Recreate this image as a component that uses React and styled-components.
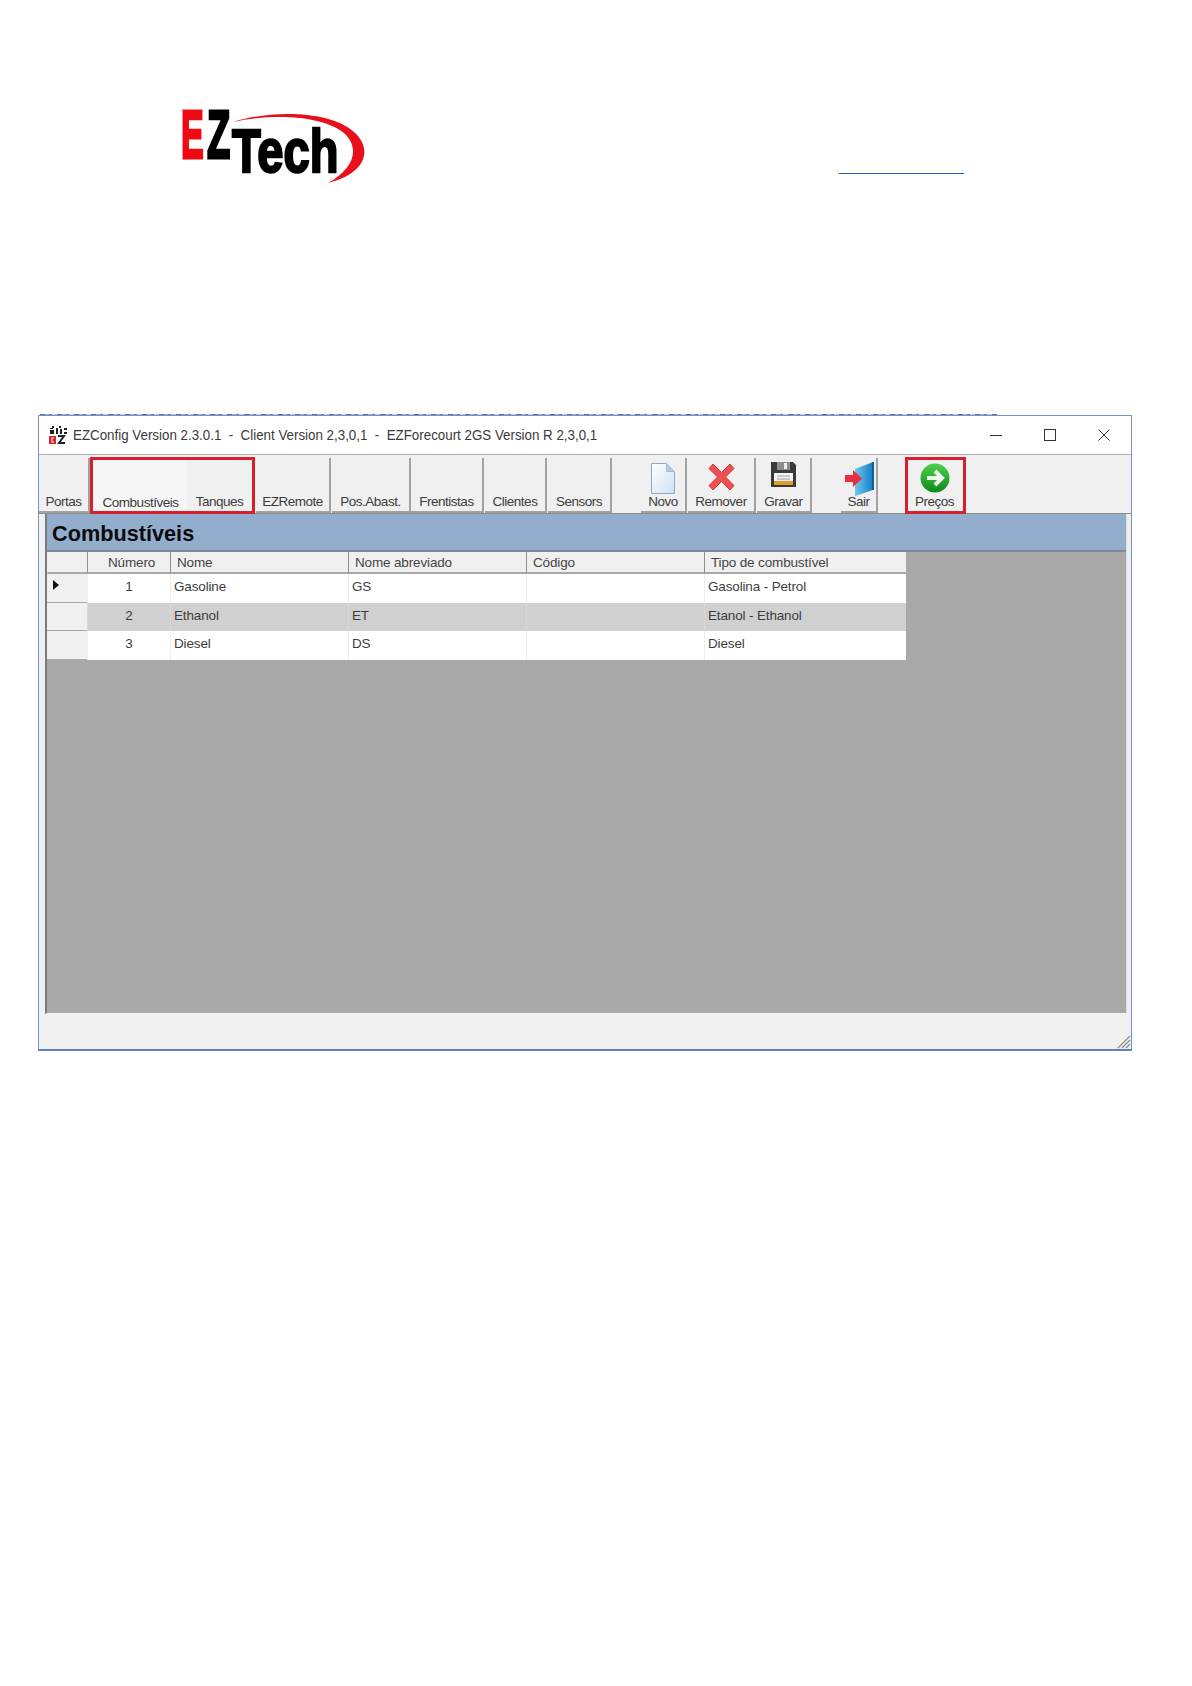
import React from "react";
import styled, { createGlobalStyle } from "styled-components";

const GlobalStyle = createGlobalStyle`
  html, body { margin: 0; padding: 0; background: #fff; }
  body { font-family: "Liberation Sans", Arial, sans-serif; }
`;

const COLUMNS = "40px 83px 178px 178px 178px 202px";

const fuels = [
  { num: 1, name: "Gasoline", short: "GS", type: "Gasolina - Petrol", current: true },
  { num: 2, name: "Ethanol", short: "ET", type: "Etanol - Ethanol", shaded: true },
  { num: 3, name: "Diesel", short: "DS", type: "Diesel" },
];

const Page = styled.div`
  width: 1192px;
  height: 1686px;
  background: #fff;
  overflow: hidden;
`;

const Header = styled.header`
  box-sizing: border-box;
  height: 414px;
  padding: 90px 0 0 170px;
  display: flex;
  align-items: flex-start;
`;

const LinkRule = styled.div`
  width: 125px;
  height: 1px;
  margin: 83px 0 0 469px;
  background: #1f5fa8;
`;

const CutLine = styled.div`
  width: 957px;
  height: 1px;
  margin-left: 40px;
  background: repeating-linear-gradient(90deg, #5f6c9f 0 5px, #a3aed4 5px 9px, #6d79aa 9px 12px, #c4cde6 12px 17px);
`;

const Window = styled.div`
  box-sizing: border-box;
  width: 1094px;
  height: 636px;
  margin-left: 38px;
  display: flex;
  flex-direction: column;
  background: #f0f0f0;
  border: 1px solid #7391cf;
  border-bottom-width: 2px;
  border-bottom-color: #5f80c4;
`;

const TitleBar = styled.div`
  height: 38px;
  flex: none;
  display: flex;
  align-items: center;
  padding: 0 21px 0 9px;
  background: #fff;
  border-bottom: 1px solid #aeaeae;
  color: #3a3a3a;
  font-size: 14.5px;
`;

const TitleText = styled.span`
  margin-left: 5px;
  flex: 1;
  white-space: pre;
  transform: scaleX(0.92);
  transform-origin: left center;
`;

const WindowControls = styled.div`
  display: flex;
  align-items: center;
  gap: 42px;
  color: #333;
`;

const Toolbar = styled.div`
  height: 59px;
  flex: none;
  display: flex;
  align-items: flex-end;
  border-bottom: 1px solid #8d8d8d;
  box-sizing: border-box;
`;

const Tab = styled.div`
  box-sizing: border-box;
  width: ${(p) => p.$w}px;
  height: ${(p) => (p.$active ? 53 : 55)}px;
  margin-left: ${(p) => p.$gap || 0}px;
  display: flex;
  flex-direction: column;
  align-items: center;
  justify-content: flex-end;
  padding-bottom: ${(p) => (p.$active ? 1 : 2)}px;
  padding-left: ${(p) => (p.$active ? 5 : 0)}px;
  background: ${(p) => (p.$active ? "#f6f6f6" : "#f0f0f0")};
  border-right: 2px solid ${(p) => (p.$flat ? "transparent" : "#a2a2a2")};
  border-bottom: 2px solid ${(p) => (p.$flat ? "transparent" : "#a2a2a2")};
  color: #3c3c3c;
  font-size: 13.5px;
  letter-spacing: -0.5px;
  white-space: nowrap;
`;

const ToolIcon = styled.svg`
  display: block;
  flex: none;
  margin-bottom: ${(p) => p.$mb || 0}px;
`;

const Highlight = styled.div`
  position: relative;
  display: flex;
  align-items: flex-end;
  margin-left: ${(p) => p.$gap || 0}px;

  &::after {
    content: "";
    position: absolute;
    inset: -1px;
    border: 3px solid #d81f2e;
    pointer-events: none;
  }
`;

const Content = styled.div`
  flex: 1;
  margin: 0 4px 0 6px;
  display: flex;
  flex-direction: column;
  background: #a9a9a9;
  border-left: 2px solid #7b7b7b;
  border-bottom: 1px solid #f7f7f7;
  border-right: 1px solid #dedede;
`;

const Banner = styled.div`
  height: 38px;
  flex: none;
  box-sizing: border-box;
  display: flex;
  align-items: center;
  padding: 3px 0 0 5px;
  background: #93aecd;
  border-bottom: 2px solid #7f8a99;
  color: #0b0b0b;
  font-size: 21.7px;
  font-weight: 700;
`;

const Grid = styled.div`
  width: 859px;
  display: flex;
  flex-direction: column;
`;

const Row = styled.div`
  display: grid;
  grid-template-columns: ${COLUMNS};
  height: ${(p) => p.$h}px;
  box-sizing: border-box;
`;

const HeadCell = styled.div`
  display: flex;
  align-items: center;
  padding-left: ${(p) => (p.$num ? 20 : 6)}px;
  background: #f0f0f0;
  border-bottom: 2px solid #a8a8a8;
  border-left: 1px solid ${(p) => (p.$blank ? "transparent" : "#8f8f8f")};
  color: #444;
  font-size: 13.5px;
  letter-spacing: -0.15px;
`;

const RowHead = styled.div`
  display: flex;
  align-items: flex-start;
  padding: 6px 0 0 6px;
  box-sizing: border-box;
  background: #f0f0f0;
  border-bottom: 1px solid #a8a8a8;
`;

const Arrow = styled.span`
  width: 0;
  height: 0;
  border-left: 6px solid #111;
  border-top: 5px solid transparent;
  border-bottom: 5px solid transparent;
`;

const Cell = styled.div`
  display: flex;
  align-items: flex-start;
  justify-content: ${(p) => (p.$num ? "center" : "flex-start")};
  padding: 5px 0 0 ${(p) => (p.$num ? 0 : 3)}px;
  box-sizing: border-box;
  background: ${(p) => (p.$shaded ? "#d0d0d0" : "#fff")};
  border-left: 1px solid ${(p) => (p.$shaded ? "#d8d8d8" : "#efefef")};
  color: #3d3d3d;
  font-size: 13.5px;
  letter-spacing: -0.15px;
`;

const StatusBar = styled.div`
  height: 35px;
  flex: none;
  display: flex;
  justify-content: flex-end;
  align-items: flex-end;
`;

const LogoText = styled.text`
  font-family: "Liberation Sans", Arial, sans-serif;
  font-weight: 700;
`;

const Logo = () => (
  <svg width="200" height="100" viewBox="170 90 200 100">
    <path
      d="M233 122C270 110 330 110 354 132C374 150 365 174 328 183C352 170 361 150 345 134C325 116 275 113 233 122Z"
      fill="#e8101c"
    />
    <g transform="translate(181 158) scale(0.5 1)">
      <LogoText fontSize="68" fill="#ee0a12" stroke="#ee0a12" strokeWidth="3">E</LogoText>
    </g>
    <g transform="translate(207 158) scale(0.56 1)">
      <LogoText fontSize="68" fill="#000" stroke="#000" strokeWidth="3">Z</LogoText>
    </g>
    <g transform="translate(232 172) scale(0.76 1)">
      <LogoText fontSize="62" fill="#000" stroke="#000" strokeWidth="2.4">Tech</LogoText>
    </g>
  </svg>
);

const AppIcon = () => (
  <svg width="20" height="20" viewBox="0 0 20 20">
    <path d="M2 3h3v1H2zM4 1h2v2H4zM8 3h2v6H8zM11 1h2v2h-2zM12 4h2v5h-2zM16 3h3v2h-3zM16 7h3v2h-3zM2 5h4v4H2z" fill="#222" />
    <rect x="1" y="11" width="7" height="8" fill="#d8242a" />
    <path d="M3 13h3M3 15h2M3 17h3" stroke="#fff" strokeWidth="1" />
    <path d="M10 11h6l-5 7h6" fill="none" stroke="#222" strokeWidth="2" />
  </svg>
);

const NovoIcon = () => (
  <ToolIcon width="24" height="31" viewBox="0 0 24 31">
    <defs>
      <linearGradient id="docFill" x1="0" y1="0" x2="1" y2="1">
        <stop offset="0" stopColor="#fff" />
        <stop offset="1" stopColor="#cfe0f4" />
      </linearGradient>
    </defs>
    <path d="M.5.5h15l8 8v22H.5z" fill="url(#docFill)" stroke="#8fa8cc" />
    <path d="M15.500.5v8h8z" fill="#b8cbe4" stroke="#a8bcd8" />
  </ToolIcon>
);

const RemoverIcon = () => (
  <ToolIcon width="27" height="28" viewBox="0 0 27 28" $mb={3}>
    <path d="M5 1l8.500 8.500L22 1l4 4.500-8.500 8.500 8.500 8.500-4 4.500-8.500-8.500L5 27l-4-4.500L9.500 14 1 5.500z" fill="#ee4f50" stroke="#cf3a3c" strokeWidth="1" />
  </ToolIcon>
);

const GravarIcon = () => (
  <ToolIcon width="27" height="27" viewBox="0 0 27 27" $mb={6}>
    <path d="M1 1h22l3 3v22H1z" fill="#3a3a3a" />
    <rect x="7" y="1" width="13" height="8" fill="#8e8e8e" />
    <rect x="14" y="2" width="3" height="6" fill="#eee" />
    <rect x="4" y="12" width="19" height="12" fill="#f4f4f4" />
    <rect x="4" y="20" width="19" height="4" fill="#e89a28" />
    <path d="M7 15h13M7 18h13" stroke="#999" />
  </ToolIcon>
);

const SairIcon = () => (
  <ToolIcon width="30" height="35" viewBox="0 0 30 35" $mb={-2}>
    <defs>
      <linearGradient id="doorFill" x1="0" y1="0" x2="1" y2="0">
        <stop offset="0" stopColor="#6fc4ea" />
        <stop offset="1" stopColor="#1480c4" />
      </linearGradient>
    </defs>
    <path d="M11 8l18-7v28l-18 6z" fill="url(#doorFill)" />
    <path d="M29 1v28" stroke="#0d5f9e" strokeWidth="2" />
    <path d="M1 14h8V9l9 8.500-9 8.500v-5H1z" fill="#ea2f3c" />
  </ToolIcon>
);

const PrecosIcon = () => (
  <ToolIcon width="30" height="30" viewBox="0 0 30 30" $mb={1}>
    <defs>
      <linearGradient id="goFill" x1="0" y1="0" x2="0" y2="1">
        <stop offset="0" stopColor="#4fd04a" />
        <stop offset="1" stopColor="#0f8a1c" />
      </linearGradient>
    </defs>
    <circle cx="15" cy="15" r="14.500" fill="url(#goFill)" />
    <path d="M7 15h14M15 8l7 7-7 7" fill="none" stroke="#eef8ea" strokeWidth="4" />
  </ToolIcon>
);

const Grip = () => (
  <svg width="14" height="14" viewBox="0 0 14 14" style={{ display: "block" }}>
    <path d="M1 13L13 1M5 13l8-8M9 13l4-4" stroke="#8a8a8a" strokeWidth="1.2" />
  </svg>
);

const App = () => (
  <Page>
    <GlobalStyle />
    <Header>
      <Logo />
      <LinkRule />
    </Header>
    <CutLine />
    <Window>
      <TitleBar>
        <AppIcon />
        <TitleText>EZConfig Version 2.3.0.1  -  Client Version 2,3,0,1  -  EZForecourt 2GS Version R 2,3,0,1</TitleText>
        <WindowControls>
          <svg width="12" height="12" viewBox="0 0 12 12"><path d="M0 6.500h12" stroke="currentColor" /></svg>
          <svg width="12" height="12" viewBox="0 0 12 12"><rect x=".5" y=".5" width="11" height="11" fill="none" stroke="currentColor" /></svg>
          <svg width="12" height="12" viewBox="0 0 12 12"><path d="M.5.5l11 11M11.500.5l-11 11" stroke="currentColor" /></svg>
        </WindowControls>
      </TitleBar>
      <Toolbar>
        <Tab $w={51}>Portas</Tab>
        <Highlight $gap={1}>
          <Tab $w={96} $active $flat>Combustíveis</Tab>
          <Tab $w={67} $flat>Tanques</Tab>
        </Highlight>
        <Tab $w={75} $gap={2}>EZRemote</Tab>
        <Tab $w={79} $gap={1}>Pos.Abast.</Tab>
        <Tab $w={73}>Frentistas</Tab>
        <Tab $w={62} $gap={1}>Clientes</Tab>
        <Tab $w={64} $gap={1}>Sensors</Tab>
        <Tab $w={46} $gap={29}><NovoIcon />Novo</Tab>
        <Tab $w={68} $gap={1}><RemoverIcon />Remover</Tab>
        <Tab $w={55} $gap={1}><GravarIcon />Gravar</Tab>
        <Tab $w={37} $gap={29}><SairIcon />Sair</Tab>
        <Highlight $gap={28}>
          <Tab $w={59} $flat><PrecosIcon />Preços</Tab>
        </Highlight>
      </Toolbar>
      <Content>
        <Banner>Combustíveis</Banner>
        <Grid>
          <Row $h={22}>
            <HeadCell $blank />
            <HeadCell $num>Número</HeadCell>
            <HeadCell>Nome</HeadCell>
            <HeadCell>Nome abreviado</HeadCell>
            <HeadCell>Código</HeadCell>
            <HeadCell>Tipo de combustível</HeadCell>
          </Row>
          {fuels.map((f) => (
            <Row key={f.num} $h={f.num === 2 ? 28 : 29}>
              <RowHead>{f.current && <Arrow />}</RowHead>
              <Cell $num $shaded={f.shaded}>{f.num}</Cell>
              <Cell $shaded={f.shaded}>{f.name}</Cell>
              <Cell $shaded={f.shaded}>{f.short}</Cell>
              <Cell $shaded={f.shaded} />
              <Cell $shaded={f.shaded}>{f.type}</Cell>
            </Row>
          ))}
        </Grid>
      </Content>
      <StatusBar>
        <Grip />
      </StatusBar>
    </Window>
  </Page>
);

export default App;
